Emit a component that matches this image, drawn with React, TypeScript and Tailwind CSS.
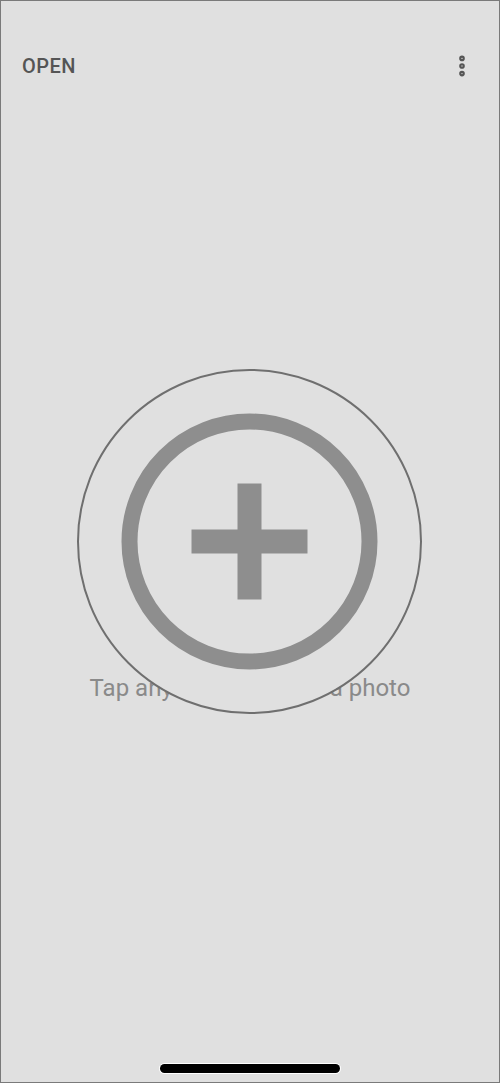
import { EllipsisVertical } from 'lucide-react';

// Empty state of the photo editor: pick an image to start
function AddPhotoButton() {
  return (
    <button className="absolute left-[76px] top-[368px] h-[345px] w-[345px]" aria-label="Open a photo">
      <svg width="345" height="345" viewBox="0 0 345 345">
        <circle cx="172.5" cy="172.5" r="171.5" fill="#e0e0e0" stroke="#6f6f6f" strokeWidth="2" />
        <circle cx="172.5" cy="172.5" r="120" fill="none" stroke="#8e8e8e" strokeWidth="16" />
        <rect x="114.5" y="160.5" width="116" height="24" fill="#8e8e8e" />
        <rect x="160.5" y="114.5" width="24" height="116" fill="#8e8e8e" />
      </svg>
    </button>
  );
}

export default function App() {
  return (
    <div className="relative flex h-[1083px] w-full flex-col border border-[#7a7a7a] bg-[#e0e0e0] font-['Roboto',sans-serif]">
      {/* Top bar */}
      <header className="flex h-[130px] items-center justify-between pl-[21px] pr-[24px]">
        <span className="text-[20px] font-medium leading-none tracking-[0.5px] text-[#555555]">OPEN</span>
        <EllipsisVertical className="h-[26px] w-[26px] text-[#555555]" strokeWidth={3.2} />
      </header>

      {/* Main area */}
      <main className="flex-1">
        <p className="pt-[543px] text-center text-[24px] leading-[28px] text-[#8a8a8a]">
          Tap anywhere to open a photo
        </p>
      </main>

      <AddPhotoButton />

      {/* Home indicator */}
      <div className="mx-auto mb-[9px] h-[9px] w-[180px] rounded-full bg-black ring-1 ring-white" />
    </div>
  );
}
